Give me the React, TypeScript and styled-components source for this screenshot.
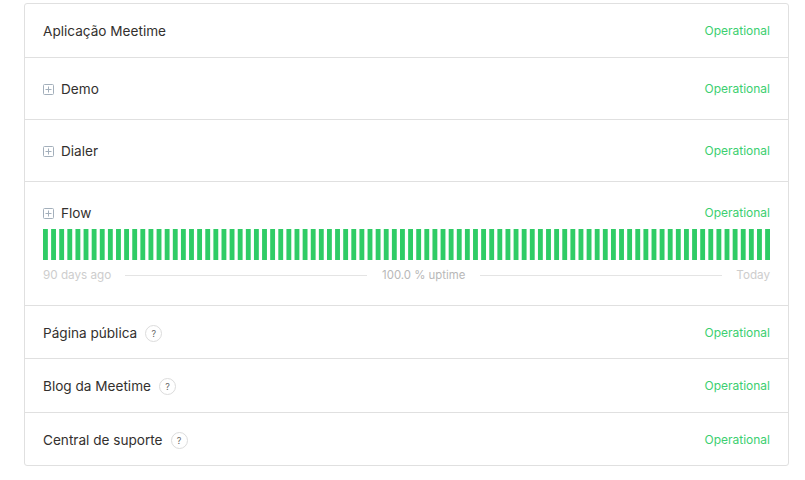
import React from "react";
import styled, { createGlobalStyle } from "styled-components";

const Global = createGlobalStyle`
  html, body { margin: 0; padding: 0; background: #fff; }
  body { font-family: Inter, "Open Sans", "Liberation Sans", sans-serif; }
`;

const Page = styled.div`
  width: 765px;
  padding: 3px 16px 14px 24px;
`;

const Card = styled.section`
  border: 1px solid #e0e0e0;
  border-radius: 3px;
`;

const Row = styled.div<{ $pad: string; $last?: boolean }>`
  padding: ${(p) => p.$pad};
  border-bottom: ${(p) => (p.$last ? "none" : "1px solid #e0e0e0")};
`;

const Head = styled.div`
  display: flex;
  align-items: center;
  height: 18px;
  font-size: 13.6px;
  line-height: 18px;
  color: #33302e;
`;

const Status = styled.span`
  margin-left: auto;
  font-size: 12px;
  color: #3ccf70;
`;

const Expand = styled.svg`
  width: 11px;
  height: 11px;
  margin-right: 7px;
  flex: none;
`;

const Help = styled.span`
  box-sizing: border-box;
  width: 17px;
  height: 17px;
  margin-left: 8px;
  border: 1px solid #dcdcdc;
  border-radius: 50%;
  display: flex;
  align-items: center;
  justify-content: center;
  font-size: 9px;
  line-height: 1;
  color: #666;
`;

const Chart = styled.svg`
  display: block;
  width: 727px;
  height: 31px;
  margin-top: 7px;
`;

const Foot = styled.div`
  display: flex;
  align-items: center;
  margin-top: 6px;
  height: 18px;
  font-size: 11.7px;
  color: #cdcdcd;
`;

const Uptime = styled.span`
  font-size: 11.4px;
  color: #b8b8b8;
  padding: 0 1px;
`;

const Rule = styled.span`
  flex: 1;
  height: 1px;
  margin: 0 14px;
  background: #e4e4e4;
`;

const Plus = () => (
  <Expand viewBox="0 0 11 11" aria-hidden>
    <rect x="0.5" y="0.5" width="10" height="10" rx="1" fill="none" stroke="#a3afbb" />
    <path d="M5.5 2.5v6M2.5 5.5h6" stroke="#a3afbb" fill="none" />
  </Expand>
);

const Bars = () => (
  <Chart viewBox="0 0 448 34" preserveAspectRatio="none" aria-hidden>
    {Array.from({ length: 90 }, (_, i) => (
      <rect key={i} x={i * 5} y={0} width={3} height={34} fill="#2fcc66" />
    ))}
  </Chart>
);

const simple = "Operational";

export default function App() {
  return (
    <Page>
      <Global />
      <Card>
        <Row $pad="18px 18px 17px">
          <Head>
            <span>Aplicação Meetime</span>
            <Status>{simple}</Status>
          </Head>
        </Row>
        {["Demo", "Dialer"].map((n) => (
          <Row $pad="22px 18px 21px" key={n}>
            <Head>
              <Plus />
              <span>{n}</span>
              <Status>{simple}</Status>
            </Head>
          </Row>
        ))}
        <Row $pad="22px 18px 21px">
          <Head>
            <Plus />
            <span>Flow</span>
            <Status>{simple}</Status>
          </Head>
          <Bars />
          <Foot>
            <span>90 days ago</span>
            <Rule />
            <Uptime>100.0 % uptime</Uptime>
            <Rule />
            <span>Today</span>
          </Foot>
        </Row>
        <Row $pad="18px 18px 16px">
          <Head>
            <span>Página pública</span>
            <Help>?</Help>
            <Status>{simple}</Status>
          </Head>
        </Row>
        <Row $pad="18px 18px 17px">
          <Head>
            <span>Blog da Meetime</span>
            <Help>?</Help>
            <Status>{simple}</Status>
          </Head>
        </Row>
        <Row $pad="18px 18px 16px" $last>
          <Head>
            <span>Central de suporte</span>
            <Help>?</Help>
            <Status>{simple}</Status>
          </Head>
        </Row>
      </Card>
    </Page>
  );
}
